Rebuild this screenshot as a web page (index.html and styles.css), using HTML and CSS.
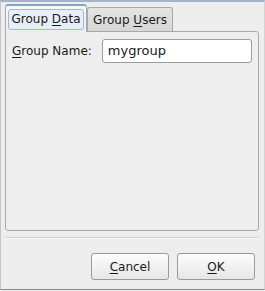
FILE: index.html
```html
<!DOCTYPE html>
<html lang="en">
<head>
  <meta charset="UTF-8" />
  <title>Group Properties</title>
  <link rel="stylesheet" href="styles.css">
</head>
<body>
  <div class="window">
    <div class="tabs">
      <div class="tab active"><span class="tab-label">Group <u>D</u>ata</span></div>
      <div class="tab"><span class="tab-label">Group <u>U</u>sers</span></div>
    </div>

    <div class="panel">
      <div class="row">
        <label for="groupName"><u>G</u>roup Name:</label>
        <input type="text" id="groupName" value="mygroup" />
      </div>
    </div>

    <div class="separator"></div>

    <div class="buttons">
      <button><u>C</u>ancel</button>
      <button><u>O</u>K</button>
    </div>
  </div>
</body>
</html>
```

FILE: styles.css
```css
body {
  margin: 0;
  background-color: #ededed;
  font-family: "DejaVu Sans", sans-serif;
  font-size: 12px;
  color: #1a1a1a;
}

u {
  text-decoration-thickness: 1px;
  text-underline-offset: 2px;
}

.window {
  width: 265px;
  height: 290px;
  box-sizing: border-box;
  border-top: 2px solid #a4b3c9;
  border-left: 1px solid #c4c4c4;
  border-right: 1px solid #d4d4d4;
  border-bottom: 1px solid #8c8c8c;
  padding: 2px 5px 0 4px;
}

.tabs {
  display: flex;
  align-items: flex-end;
  height: 27px;
  position: relative;
  z-index: 1;
}

.tab {
  width: 86px;
  height: 24px;
  box-sizing: border-box;
  border: 1px solid #a8a8a8;
  border-bottom: none;
  border-radius: 3px 3px 0 0;
  background: linear-gradient(#e4e4e4, #d6d6d6);
  display: flex;
  justify-content: center;
  align-items: center;
  padding-top: 1px;
}

.tab.active {
  width: 82px;
  height: 28px;
  margin-bottom: -1px;
  border-color: #9eaabb;
  border-top: 2px solid #87a3c9;
  background: linear-gradient(#f8f8f8, #ededed);
  padding-top: 0;
}

.tab-label {
  display: block;
  padding: 2px 2px 3px;
  border: 1px solid transparent;
  border-radius: 3px;
}

.tab.active .tab-label {
  border-color: #9fb8d8;
  background-color: #e8eef6;
}

.panel {
  height: 200px;
  box-sizing: border-box;
  border: 1px solid #a8a8a8;
  border-radius: 0 3px 3px 3px;
  background-color: #eeeeee;
  padding: 7px 6px 0 6px;
}

.row {
  display: flex;
  align-items: center;
  gap: 10px;
}

label {
  display: block;
}

input {
  width: 150px;
  height: 24px;
  box-sizing: border-box;
  border: 1px solid #9c9c9c;
  border-radius: 3px;
  padding: 2px 5px 3px;
  font-family: "DejaVu Sans", sans-serif;
  font-size: 13px;
  color: #1a1a1a;
  background-color: #fff;
  outline: none;
}

.separator {
  margin-top: 6px;
  height: 1px;
  background-color: #cfcfcf;
  border-bottom: 1px solid #fafafa;
}

.buttons {
  display: flex;
  justify-content: flex-end;
  gap: 8px;
  margin-top: 14px;
  padding-right: 4px;
}

button {
  width: 78px;
  height: 27px;
  box-sizing: border-box;
  border: 1px solid #9a9a9a;
  border-radius: 3px;
  background: linear-gradient(#fdfdfd, #e6e6e6);
  font-family: "DejaVu Sans", sans-serif;
  font-size: 12px;
  color: #1a1a1a;
  padding: 0;
}
```
